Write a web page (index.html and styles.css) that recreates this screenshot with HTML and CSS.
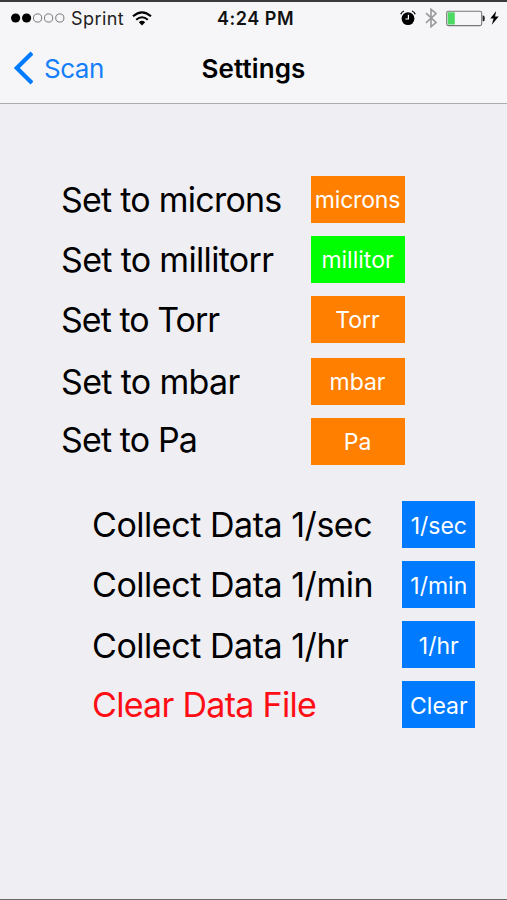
FILE: index.html
```html
<!DOCTYPE html>
<html lang="en">
<head>
<meta charset="utf-8">
<title>Settings</title>
<link rel="stylesheet" href="styles.css">
</head>
<body>
<div class="screen">
  <header class="top">
    <div class="status">
      <div class="carrier">
        <svg class="signal" width="54" height="12" viewBox="0 0 54 12">
          <circle cx="4.6" cy="6" r="4.6"/><circle cx="15.6" cy="6" r="4.6"/>
          <g fill="none" stroke="#777" stroke-width="1"><circle cx="26.6" cy="6" r="4.1"/><circle cx="37.6" cy="6" r="4.1"/><circle cx="48.8" cy="6" r="4.1"/></g>
        </svg>
        <span class="carrier-name">Sprint</span>
        <svg class="wifi" width="20" height="15" viewBox="0 0 20 15">
          <g fill="none" stroke="#000" stroke-width="2.1"><path d="M1 5.3Q10 -2.6 19 5.3"/><path d="M4.2 8.7Q10 3.8 15.8 8.7"/></g>
          <path d="M6.8 11.2Q10 8.3 13.2 11.2L10 14.4Z"/>
        </svg>
      </div>
      <span class="time">4:24 PM</span>
      <div class="indicators">
        <svg width="16" height="16" viewBox="0 0 16 16">
          <circle cx="8" cy="8.6" r="6.4"/>
          <path d="M.8 4.2Q1.6 1.9 4 1M15.2 4.2Q14.4 1.9 12 1" fill="none" stroke="#000" stroke-width="1.3"/>
          <path d="M8.4 4.8V9H5.4" fill="none" stroke="#fff" stroke-width="1.2"/>
        </svg>
        <svg class="bluetooth" width="12" height="20" viewBox="0 0 12 20"><path d="M1 5.2L11 14.5L6 18.7V1.3L11 5.5L1 14.8" fill="none" stroke="#999" stroke-width="1.6"/></svg>
        <svg class="battery" width="39" height="17" viewBox="0 0 39 17">
          <rect x=".7" y="1.2" width="35" height="14.4" rx="1.8" fill="none" stroke="#777" stroke-width="1.1"/>
          <rect x="1.8" y="2.3" width="7" height="12.2" fill="#4cd964"/>
          <path d="M36.6 5.6h.7q1.5 0 1.5 2.8t-1.5 2.8h-.7z" fill="#222"/>
        </svg>
        <svg class="bolt" width="9" height="14" viewBox="0 0 9 14"><path d="M6.2 0L.3 7.6H3.6L1.8 13.8L8.7 5.4H5Z"/></svg>
      </div>
    </div>
    <nav class="nav">
      <a class="back"><svg width="20" height="34" viewBox="0 0 20 34"><path d="M19 2L3.8 17L19 32" fill="none" stroke="#007aff" stroke-width="4.2"/></svg><span class="back-text">Scan</span></a>
      <h1 class="title">Settings</h1>
    </nav>
  </header>
  <main>
    <section class="units">
      <div class="row"><span class="label">Set to microns</span><button class="btn microns">microns</button></div>
      <div class="row"><span class="label millitorr">Set to millitorr</span><button class="btn selected">millitor</button></div>
      <div class="row"><span class="label torr">Set to Torr</span><button class="btn">Torr</button></div>
      <div class="row spaced"><span class="label mbar">Set to mbar</span><button class="btn">mbar</button></div>
      <div class="row"><span class="label pascal">Set to Pa</span><button class="btn">Pa</button></div>
    </section>
    <section class="data">
      <div class="row"><span class="label">Collect Data 1/sec</span><button class="btn">1/sec</button></div>
      <div class="row"><span class="label">Collect Data 1/min</span><button class="btn">1/min</button></div>
      <div class="row"><span class="label lowered">Collect Data 1/hr</span><button class="btn">1/hr</button></div>
      <div class="row"><span class="label danger">Clear Data File</span><button class="btn">Clear</button></div>
    </section>
  </main>
</div>
</body>
</html>
```
FILE: styles.css
```css
* { box-sizing: border-box; }
body { margin: 0; background: #efeef3; font-family: Inter, "Liberation Sans", sans-serif; color: #000; }
.screen { height: 900px; overflow: hidden; border-top: 2px solid #3b393c; border-bottom: 1px solid #68676b; }
.top { height: 102px; background: #f6f6f8; border-bottom: 1px solid #acabb0; }
.status { height: 32px; display: grid; grid-template-columns: 1fr auto 1fr; align-items: center; padding: 0 8px 0 11px; }
.carrier { display: flex; align-items: center; }
.carrier-name { font-size: 18px; letter-spacing: .45px; margin-left: 6px; width: 54px; white-space: nowrap; color: #222; }
.wifi { margin-left: 7px; }
.time { font-size: 18px; font-weight: 600; letter-spacing: .55px; margin-left: 1px; color: #111; }
.indicators { display: flex; align-items: center; justify-content: flex-end; }
.bluetooth { margin-left: 9px; }
.battery { margin-left: 9px; }
.bolt { margin-left: 5px; }
.nav { display: grid; grid-template-columns: 1fr auto 1fr; align-items: center; height: 68px; padding-left: 13px; padding-right: 13px; }
.back { display: flex; align-items: center; color: #157efb; font-size: 26px; letter-spacing: -.5px; }
.back-text { margin-left: 11px; padding-top: 1px; }
.title { margin: 0; padding-top: 1px; font-size: 26px; font-weight: 600; letter-spacing: .1px; }
.units { margin: 71.5px 102.5px 0 61px; display: flex; flex-direction: column; gap: 13px; }
.data { margin: 36.5px 31.7px 0 92px; display: flex; flex-direction: column; gap: 13px; }
.row { display: flex; justify-content: space-between; align-items: flex-start; height: 47px; }
.spaced { margin-top: 2px; }
.label { font-size: 34px; line-height: 47px; letter-spacing: -.76px; white-space: nowrap; }
.millitorr { letter-spacing: -.67px; }
.torr { letter-spacing: -.98px; }
.mbar { letter-spacing: -.66px; }
.pascal { letter-spacing: -.88px; margin-top: -2px; }
.data .label { letter-spacing: -.46px; }
.lowered { margin-top: 1px; }
.data .danger { color: #ff0d14; letter-spacing: -.7px; }
.btn { width: 94px; height: 47px; padding: 2px 0 0; border: 0; background: #ff8000; color: #fff; font: 23px Inter, "Liberation Sans", sans-serif; text-align: center; white-space: nowrap; }
.microns { letter-spacing: -.2px; }
.selected { background: #00ff00; }
.data .btn { width: 73px; background: #007aff; }
```
